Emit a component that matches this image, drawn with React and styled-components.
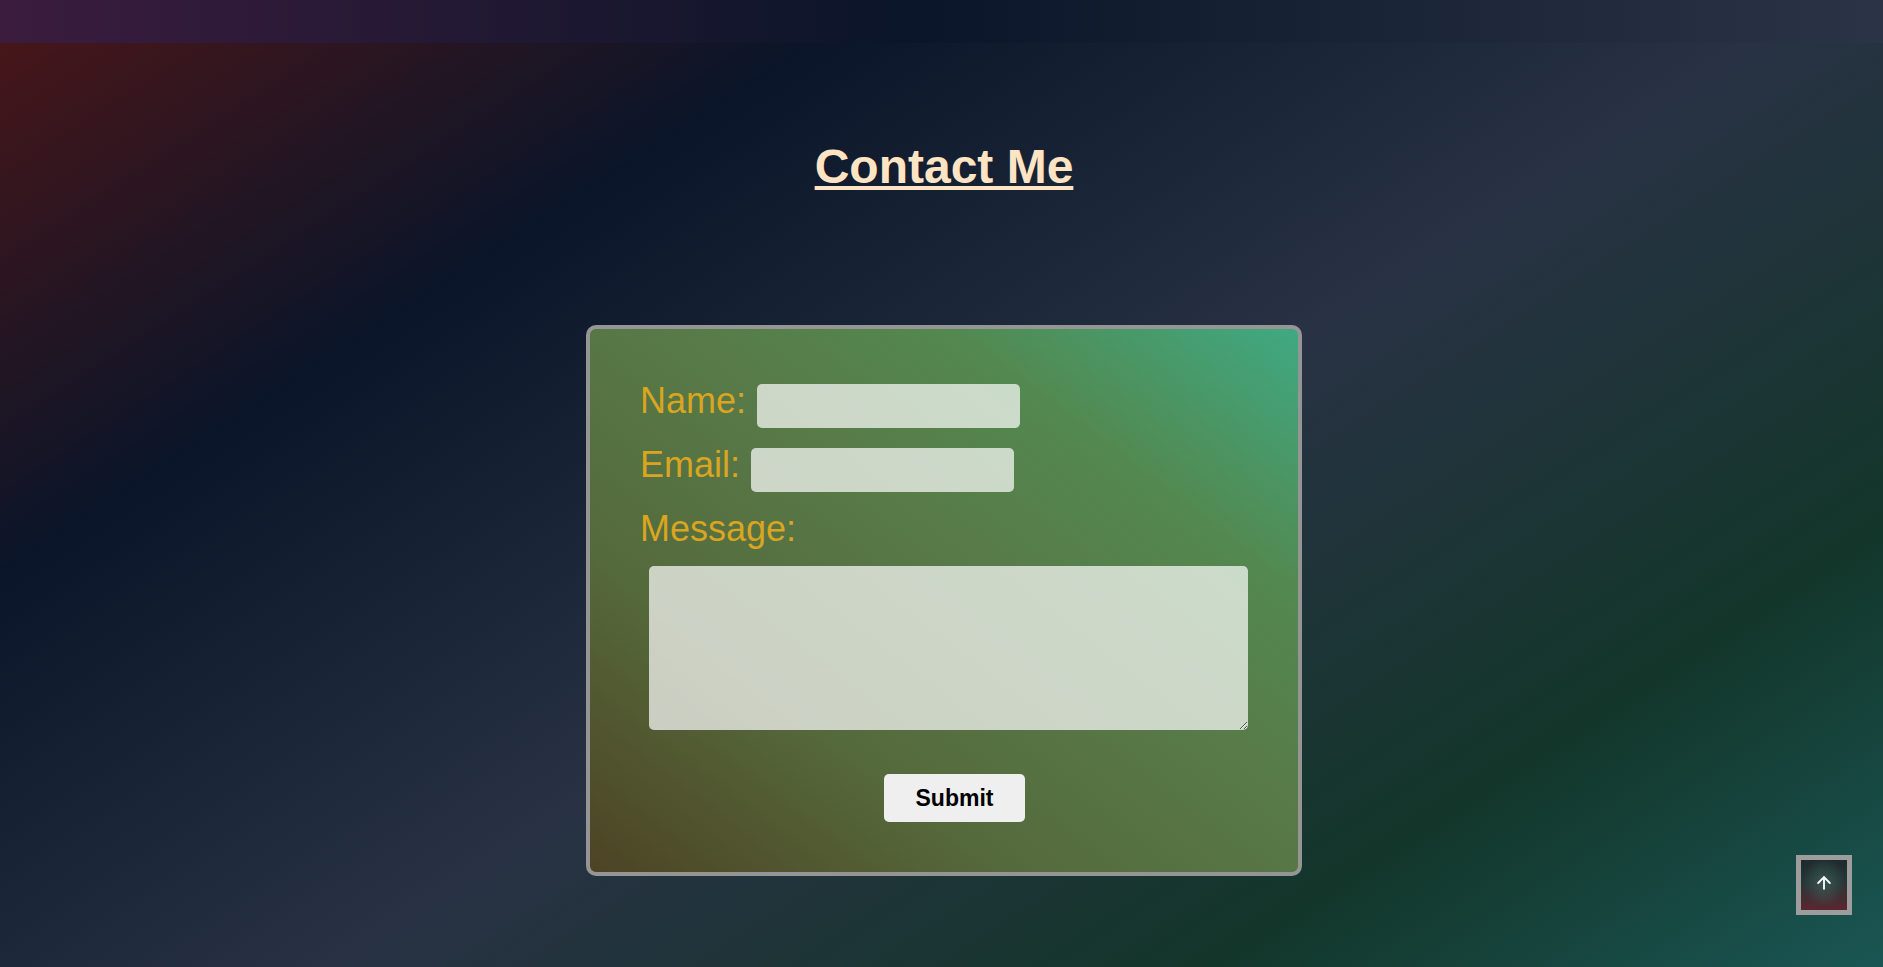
import { createGlobalStyle, styled } from "styled-components";
import { ArrowUp } from "lucide-react";

const GlobalStyle = createGlobalStyle`
  * {
    box-sizing: border-box;
  }
  body {
    margin: 0;
    font-family: "Liberation Sans", Arial, sans-serif;
  }
`;

const Page = styled.div`
  min-height: 100vh;
  display: flex;
  flex-direction: column;
  padding-left: 5px;
  background: linear-gradient(
    147deg,
    #4b1618 0%,
    #0b1529 26%,
    #283244 54%,
    #13362a 80%,
    #1a5654 100%
  );
`;

const TopBar = styled.header`
  height: 43px;
  margin-left: -5px;
  background: linear-gradient(to right, #3b1c3e 0%, #0b1529 48%, #2b3446 100%);
`;

const Title = styled.h1`
  margin: 96px 0 0;
  text-align: center;
  font-size: 48px;
  font-weight: 700;
  color: #ffe4c4;
  text-decoration: underline;
`;

const Card = styled.form`
  width: 716px;
  margin: 131px auto 0;
  padding: 51px 50px 50px;
  border: 4px solid #959595;
  border-radius: 10px;
  display: flex;
  flex-direction: column;
  background: linear-gradient(
    to top right,
    #4d4324 0%,
    #556a3c 30%,
    #587a48 55%,
    #53884f 75%,
    #3fa982 100%
  );
`;

const Row = styled.div`
  display: flex;
  align-items: flex-start;
  gap: 11px;
  margin-top: ${({ first }) => (first ? "0" : "16px")};
`;

const Label = styled.label`
  font-size: 36px;
  color: #daa520;
  line-height: normal;
`;

const Field = styled.input`
  width: 263px;
  height: 44px;
  margin-top: 4px;
  border: none;
  border-radius: 5px;
  background: rgba(255, 255, 255, 0.7);
  outline: none;
  padding: 0 10px;
  font-size: 16px;
`;

const Message = styled.textarea`
  align-self: flex-end;
  width: 599px;
  height: 164px;
  margin-top: 16px;
  border: none;
  border-radius: 5px;
  background: rgba(255, 255, 255, 0.7);
  outline: none;
  font-family: inherit;
`;

const Actions = styled.div`
  display: flex;
  justify-content: center;
  padding-left: 21px;
  margin-top: 44px;
`;

const Submit = styled.button`
  width: 141px;
  height: 48px;
  border: none;
  border-radius: 5px;
  background: #efefef;
  color: #000;
  font-family: inherit;
  font-size: 23px;
  font-weight: 700;
  cursor: pointer;
`;

const ScrollTop = styled.button`
  position: fixed;
  right: 31px;
  bottom: 52px;
  width: 56px;
  height: 60px;
  padding: 0;
  border: 5px solid #9d9d9d;
  display: flex;
  align-items: center;
  justify-content: center;
  color: #fff;
  cursor: pointer;
  background: radial-gradient(
      ellipse at 50% 45%,
      rgba(62, 96, 92, 0.75) 0%,
      rgba(62, 96, 92, 0) 65%
    ),
    linear-gradient(to bottom, #1e2a2c 0%, #263636 45%, #5c2630 100%);

  svg {
    margin-top: -4px;
  }
`;

const App = () => {
  return (
    <Page>
      <GlobalStyle />
      <TopBar />
      <Title>Contact Me</Title>
      <Card onSubmit={(e) => e.preventDefault()}>
        <Row first>
          <Label htmlFor="name">Name:</Label>
          <Field id="name" type="text" />
        </Row>
        <Row>
          <Label htmlFor="email">Email:</Label>
          <Field id="email" type="email" />
        </Row>
        <Row>
          <Label htmlFor="message">Message:</Label>
        </Row>
        <Message id="message" />
        <Actions>
          <Submit type="submit">Submit</Submit>
        </Actions>
      </Card>
      <ScrollTop type="button" aria-label="Back to top">
        <ArrowUp size={20} strokeWidth={2.2} />
      </ScrollTop>
    </Page>
  );
};

export default App;
